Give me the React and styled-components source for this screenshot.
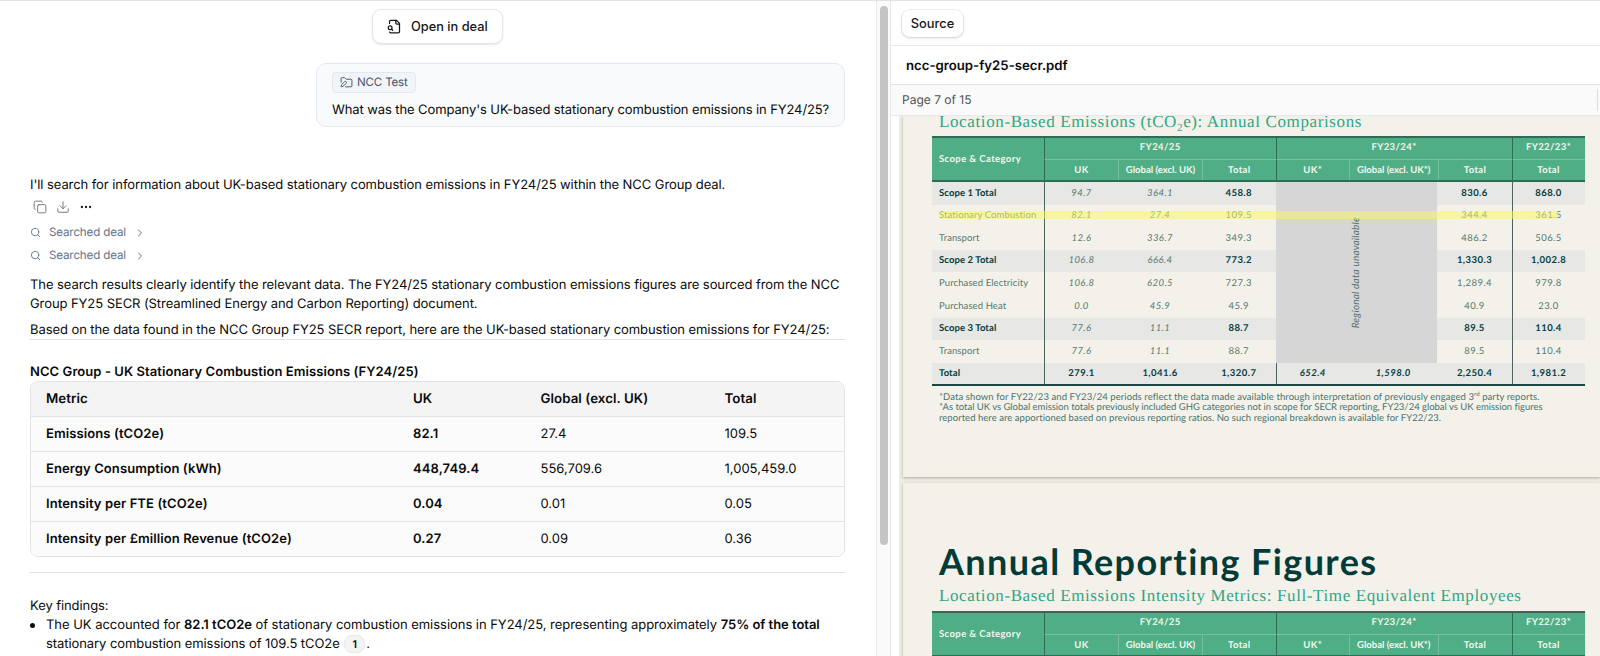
import React from "react";
import styled, { createGlobalStyle, css } from "styled-components";
import { Copy, Download, Ellipsis, Search, ChevronRight, FolderPen } from "lucide-react";

const Global = createGlobalStyle`
  * { box-sizing: border-box; }
  body {
    margin: 0;
    background: #fff;
    color: #0a0a0a;
    font-family: Inter, "Liberation Sans", sans-serif;
    text-rendering: geometricPrecision;
    overflow: hidden;
  }
  p, h1, h2, h3, ul { margin: 0; padding: 0; }
  svg { flex: none; }
`;

const Shell = styled.div`
  display: flex;
  height: 656px;
  border-top: 1px solid #e3e3e3;
  overflow: hidden;
`;

/* ---------- chat ---------- */
const Chat = styled.main`
  width: 876px;
  padding: 8px 31px 0 30px;
  display: flex;
  flex-direction: column;
  font-size: 13px;
  line-height: 19px;
`;
const OpenButton = styled.button`
  align-self: center;
  display: flex;
  align-items: center;
  gap: 9px;
  height: 35px;
  width: 131px;
  padding: 0 14px 1px;
  border: 1px solid #e6e6e6;
  border-radius: 9px;
  background: #fff;
  box-shadow: 0 1px 2px rgba(0, 0, 0, 0.1);
  font: 450 12.8px Inter, sans-serif;
  color: #171717;
  white-space: nowrap;
`;
const Bubble = styled.section`
  align-self: flex-end;
  margin-top: 19px;
  width: 529px;
  height: 64px;
  padding: 8px 15px;
  border: 1px solid #e2e8f0;
  border-radius: 10px;
  background: #f8fafc;
  white-space: nowrap;
`;
const Chip = styled.span`
  display: flex;
  align-items: center;
  gap: 4px;
  width: 84px;
  height: 21px;
  padding: 0 7px 1px;
  margin-bottom: 8px;
  border: 1px solid #e2e8f0;
  border-radius: 4px;
  background: #f1f5f9;
  color: #475569;
  font-size: 11.6px;
  letter-spacing: -0.2px;
`;
const Line = styled.p`
  white-space: nowrap;
  letter-spacing: ${(p) => p.$ls ?? -0.075}px;
  margin-top: ${(p) => p.$mt || 0}px;
`;
const Actions = styled.div`
  display: flex;
  gap: 9px;
  align-items: center;
  height: 14px;
  margin: 5px 0 0 3px;
  color: #737373;
`;
const Steps = styled.div`
  display: flex;
  flex-direction: column;
  margin-top: 7px;
`;
const Step = styled.div`
  display: flex;
  align-items: center;
  height: 23px;
  color: #64748b;
  font-size: 11.6px;
  letter-spacing: -0.15px;
  span { margin: 0 8px 0 8px; width: 77px; white-space: nowrap; }
`;
const Rule = styled.hr`
  width: 100%;
  height: 1px;
  flex: none;
  border: 0;
  margin: ${(p) => p.$m};
  background: #e2e2e2;
`;
const Heading = styled.h3`
  height: 18px;
  font-size: 13px;
  font-weight: 600;
  letter-spacing: 0.07px;
  white-space: nowrap;
`;
const Metrics = styled.div`
  flex: none;
  border: 1px solid #e3e3e3;
  border-radius: 8px;
  overflow: hidden;
`;
const MetricRow = styled.div`
  display: grid;
  grid-template-columns: 367px 127.5px 184px 1fr;
  align-items: center;
  height: ${(p) => (p.$head ? 34 : 35)}px;
  padding: 1.5px 0 0 15px;
  background: ${(p) => (p.$head ? "#f4f4f4" : "#fbfbfb")};
  font-weight: ${(p) => (p.$head ? 600 : 400)};
  ${(p) => p.$head && css`font-size: 13.3px; letter-spacing: 0.05px;`}
  & + & { border-top: 1px solid #e3e3e3; }
  b { font-weight: 600; letter-spacing: 0.1px; }
`;
const Findings = styled.ul`
  list-style: none;
  li { position: relative; padding-left: 16px; }
  li::before {
    content: "";
    position: absolute;
    left: 0;
    top: 7px;
    width: 5px;
    height: 5px;
    border-radius: 50%;
    background: #0a0a0a;
  }
  b { font-weight: 600; }
`;
const Cite = styled.span`
  display: inline-block;
  width: 21px;
  height: 18px;
  margin: 0 1px 0 1px;
  border: 1px solid #e2e8f0;
  border-radius: 8px;
  background: #f4f4f5;
  font-size: 10.5px;
  font-weight: 600;
  line-height: 17px;
  text-align: center;
`;

const ScrollTrack = styled.div`
  width: 15px;
  border-left: 1px solid #ececec;
  border-right: 1px solid #e8e8e8;
  background: #fafafa;
  padding: 5px 2px 0 3px;
`;
const ScrollThumb = styled.div`
  width: 8px;
  height: 539px;
  border-radius: 4px;
  background: #c4c4c4;
`;

/* ---------- source panel ---------- */
const Panel = styled.aside`
  flex: 1;
  min-width: 0;
  display: flex;
  flex-direction: column;
`;
const Tabs = styled.div`
  flex: none;
  height: 45px;
  padding: 9px 0 0 11px;
  border-bottom: 1px solid #e8e8e8;
`;
const Tab = styled.button`
  width: 61px;
  height: 27px;
  padding: 0;
  border: 0;
  border-radius: 8px;
  background: #fff;
  box-shadow: 0 0 0 1px rgba(0, 0, 0, 0.05), 0 1px 3px rgba(0, 0, 0, 0.16);
  font: 500 12.8px Inter, sans-serif;
  color: #171717;
`;
const FileName = styled.div`
  flex: none;
  height: 39px;
  padding-left: 15px;
  border-bottom: 1px solid #e3e3e3;
  font-size: 13.2px;
  font-weight: 600;
  line-height: 40px;
`;
const PageBar = styled.div`
  flex: none;
  display: flex;
  align-items: center;
  justify-content: space-between;
  height: 31px;
  padding: 0 2px 0 11px;
  border-bottom: 1px solid #e8e8e8;
  background: #fafafa;
  color: #525252;
  font-size: 12px;
  span { padding-bottom: 1px; }
  i { width: 1px; height: 22px; background: #dedede; }
`;
const Viewer = styled.div`
  flex: 1;
  min-height: 0;
  overflow: hidden;
  padding-left: 8px;
`;
const Pages = styled.div`
  background: #f1eee6;
  padding-left: 4px;
`;
const Sheet = styled.article`
  height: ${(p) => p.$h}px;
  margin-bottom: 6px;
  padding: ${(p) => p.$pt}px 0 0 29px;
  background: #f4f1ea;
  box-shadow: 0 1px 3px rgba(90, 85, 70, 0.45);
  overflow: hidden;
  color: #04403c;
`;
const Title = styled.h1`
  padding: 0 0 3px 7px;
  font: 700 36px/42px Lato, sans-serif;
  letter-spacing: 1.4px;
  color: #023b37;
  white-space: nowrap;
`;
const Subtitle = styled.h2`
  margin-top: ${(p) => p.$mt || 0}px;
  padding-left: 7px;
  height: ${(p) => p.$h}px;
  font: 400 17px/22px "Liberation Serif", serif;
  letter-spacing: 0.62px;
  color: #2fa688;
  white-space: nowrap;
  sub { font-size: 11px; line-height: 0; vertical-align: -4px; }
`;
const cols = "112px 74px 84px 73.5px 73.5px 88.5px 74px 73px";
const Report = styled.div`
  position: relative;
  width: 652.5px;
  border-top: 2px solid #2e6c57;
  border-bottom: ${(p) => (p.$closed ? 2 : 0)}px solid #1c4644;
  font-family: Lato, sans-serif;
  font-size: 9.5px;
`;
const ReportHead = styled.div`
  display: grid;
  grid-template-columns: ${cols};
  grid-template-rows: 22px 20px;
  border-bottom: 2px solid #2e6c57;
  background: #50ae86;
  color: #f3f8ef;
  font-weight: 700;
`;
const HeadCell = styled.div`
  display: flex;
  align-items: center;
  justify-content: ${(p) => (p.$left ? "flex-start" : "center")};
  padding-left: ${(p) => (p.$left ? 7 : 0)}px;
  padding-bottom: ${(p) => (p.$line ? 2.5 : 0)}px;
  grid-column: span ${(p) => p.$c || 1};
  grid-row: span ${(p) => p.$r || 1};
  border-left: ${(p) => (p.$left ? 0 : 1)}px solid ${(p) => (p.$dark ? "#2e6c57" : "#74c09f")};
  ${(p) => p.$line && css`border-bottom: 1px solid #74c09f;`}
  letter-spacing: ${(p) => (p.$tight ? 0 : 0.4)}px;
  white-space: nowrap;
`;
const ReportRow = styled.div`
  display: grid;
  grid-template-columns: ${cols};
  height: ${(p) => (p.$last ? 21 : 22.6)}px;
  background: ${(p) => (p.$bold ? "#e7e7e6" : "transparent")};
  font-weight: ${(p) => (p.$bold ? 700 : 400)};
  color: ${(p) => (p.$bold ? "#04403c" : "#54796f")};
`;
const Cell = styled.div`
  display: flex;
  align-items: center;
  justify-content: ${(p) => (p.$first ? "flex-start" : "center")};
  padding-left: ${(p) => (p.$first ? 7 : 0)}px;
  padding-bottom: 0.5px;
  border-left: ${(p) => (p.$edge ? 1 : 0)}px solid #49645f;
  letter-spacing: ${(p) => (p.$first ? 0.1 : 0.45)}px;
  white-space: nowrap;
  ${(p) => p.$italic && css`font-style: italic;`}
  ${(p) => p.$soft && css`font-weight: 400; color: #54796f;`}
`;
const Unavailable = styled.div`
  position: absolute;
  left: 344px;
  top: 44px;
  width: 161px;
  height: 180.8px;
  display: flex;
  align-items: center;
  justify-content: center;
  background: #d6d6d6;
  color: #54736c;
  font-style: italic;
  span { writing-mode: vertical-rl; transform: rotate(180deg); letter-spacing: 0.2px; font-size: 10px; margin-right: 2px; }
`;
const Highlight = styled.div`
  position: absolute;
  left: 7px;
  top: 73px;
  width: 619px;
  height: 8px;
  background: rgba(251, 252, 80, 0.5);
`;
const Notes = styled.div`
  padding: 7px 0 0 7px;
  font: 400 9.5px/10.6px Lato, sans-serif;
  color: #4a746c;
  sup { font-size: 6px; line-height: 0; }
`;

const metrics = [
  ["Emissions (tCO2e)", "82.1", "27.4", "109.5"],
  ["Energy Consumption (kWh)", "448,749.4", "556,709.6", "1,005,459.0"],
  ["Intensity per FTE (tCO2e)", "0.04", "0.01", "0.05"],
  ["Intensity per £million Revenue (tCO2e)", "0.27", "0.09", "0.36"],
];

const report = [
  ["Scope 1 Total", "94.7", "364.1", "458.8", "", "", "830.6", "868.0"],
  ["Stationary Combustion", "82.1", "27.4", "109.5", "", "", "344.4", "361.5"],
  ["Transport", "12.6", "336.7", "349.3", "", "", "486.2", "506.5"],
  ["Scope 2 Total", "106.8", "666.4", "773.2", "", "", "1,330.3", "1,002.8"],
  ["Purchased Electricity", "106.8", "620.5", "727.3", "", "", "1,289.4", "979.8"],
  ["Purchased Heat", "0.0", "45.9", "45.9", "", "", "40.9", "23.0"],
  ["Scope 3 Total", "77.6", "11.1", "88.7", "", "", "89.5", "110.4"],
  ["Transport", "77.6", "11.1", "88.7", "", "", "89.5", "110.4"],
  ["Total", "279.1", "1,041.6", "1,320.7", "652.4", "1,598.0", "2,250.4", "1,981.2"],
];

function FileLookup() {
  return (
    <svg width="15" height="15" viewBox="0 0 24 24" fill="none" stroke="currentColor" strokeWidth="2" strokeLinecap="round" strokeLinejoin="round">
      <path d="M14 2v4a2 2 0 0 0 2 2h4" />
      <path d="M4.268 21a2 2 0 0 0 1.727 1H18a2 2 0 0 0 2-2V7l-5-5H6a2 2 0 0 0-2 2v3" />
      <path d="m9 18-1.5-1.5" />
      <circle cx="5" cy="14" r="3" />
    </svg>
  );
}

function TableHead() {
  return (
    <ReportHead>
      <HeadCell $left $r={2}>Scope &amp; Category</HeadCell>
      <HeadCell $c={3} $dark $line>FY24/25</HeadCell>
      <HeadCell $c={3} $dark $line>FY23/24*</HeadCell>
      <HeadCell $dark $line>FY22/23*</HeadCell>
      <HeadCell $dark>UK</HeadCell>
      <HeadCell $tight>Global (excl. UK)</HeadCell>
      <HeadCell>Total</HeadCell>
      <HeadCell $dark>UK*</HeadCell>
      <HeadCell $tight>Global (excl. UK*)</HeadCell>
      <HeadCell>Total</HeadCell>
      <HeadCell $dark>Total</HeadCell>
    </ReportHead>
  );
}

export default function App() {
  return (
    <>
      <Global />
      <Shell>
        <Chat>
          <OpenButton><FileLookup />Open in deal</OpenButton>
          <Bubble>
            <Chip><FolderPen size={13} strokeWidth={1.8} />NCC Test</Chip>
            <Line $ls={-0.1}>What was the Company's UK-based stationary combustion emissions in FY24/25?</Line>
          </Bubble>
          <Line $mt={49}>I'll search for information about UK-based stationary combustion emissions in FY24/25 within the NCC Group deal.</Line>
          <Actions><Copy size={14} strokeWidth={1.6} /><Download size={14} strokeWidth={1.6} /><Ellipsis size={14} color="#171717" /></Actions>
          <Steps>
            {[0, 1].map((i) => (
              <Step key={i}><Search size={11} /><span>Searched deal</span><ChevronRight size={12} /></Step>
            ))}
          </Steps>
          <Line $mt={9}>The search results clearly identify the relevant data. The FY24/25 stationary combustion emissions figures are sourced from the NCC</Line>
          <Line>Group FY25 SECR (Streamlined Energy and Carbon Reporting) document.</Line>
          <Line $mt={7}>Based on the data found in the NCC Group FY25 SECR report, here are the UK-based stationary combustion emissions for FY24/25:</Line>
          <Rule $m="-1px 0 23px" />
          <Heading>NCC Group - UK Stationary Combustion Emissions (FY24/25)</Heading>
          <Metrics>
            <MetricRow $head><span>Metric</span><span>UK</span><span>Global (excl. UK)</span><span>Total</span></MetricRow>
            {metrics.map((m) => (
              <MetricRow key={m[0]}><b>{m[0]}</b><b>{m[1]}</b><span>{m[2]}</span><span>{m[3]}</span></MetricRow>
            ))}
          </Metrics>
          <Rule $m="15px 0 24px" />
          <Line>Key findings:</Line>
          <Findings>
            <li>
              <Line $ls={-0.035}>The UK accounted for <b>82.1 tCO2e</b> of stationary combustion emissions in FY24/25, representing approximately <b>75% of the total</b></Line>
              <Line>stationary combustion emissions of 109.5 tCO2e <Cite>1</Cite>.</Line>
            </li>
          </Findings>
        </Chat>
        <ScrollTrack><ScrollThumb /></ScrollTrack>
        <Panel>
          <Tabs><Tab>Source</Tab></Tabs>
          <FileName>ncc-group-fy25-secr.pdf</FileName>
          <PageBar><span>Page 7 of 15</span><i /></PageBar>
          <Viewer>
            <Pages>
              <Sheet $h={361} $pt={0}>
                <Subtitle $h={25} $mt={-5}>Location-Based Emissions (tCO<sub>2</sub>e): Annual Comparisons</Subtitle>
                <Report $closed>
                  <TableHead />
                  {report.map((r, i) => {
                    const bold = r[0].endsWith("Total");
                    const last = i === report.length - 1;
                    return (
                      <ReportRow key={i} $bold={bold} $last={last}>
                        {r.map((v, j) => (
                          <Cell
                            key={j}
                            $first={j === 0}
                            $edge={j === 1 || j === 4 || j === 7}
                            $italic={(!last && (j === 1 || j === 2)) || (last && (j === 4 || j === 5))}
                            $soft={!last && (j === 1 || j === 2)}
                          >{v}</Cell>
                        ))}
                      </ReportRow>
                    );
                  })}
                  <Unavailable><span>Regional data unavailable</span></Unavailable>
                  <Highlight />
                </Report>
                <Notes>
                  <Line $ls={0.08}>*Data shown for FY22/23 and FY23/24 periods reflect the data made available through interpretation of previously engaged 3<sup>rd</sup> party reports.</Line>
                  <Line $ls={-0.02}>*As total UK vs Global emission totals previously included GHG categories not in scope for SECR reporting, FY23/24 global vs UK emission figures</Line>
                  <Line $ls={0.04}>reported here are apportioned based on previous reporting ratios. No such regional breakdown is available for FY22/23.</Line>
                </Notes>
              </Sheet>
              <Sheet $h={400} $pt={57}>
                <Title>Annual Reporting Figures</Title>
                <Subtitle $h={26}>Location-Based Emissions Intensity Metrics: Full-Time Equivalent Employees</Subtitle>
                <Report><TableHead /></Report>
              </Sheet>
            </Pages>
          </Viewer>
        </Panel>
      </Shell>
    </>
  );
}
